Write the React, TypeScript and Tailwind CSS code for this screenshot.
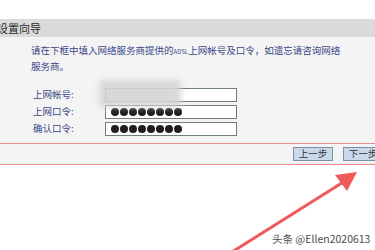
import React from "react";

const cjk = { fontFamily: '"Noto Sans CJK SC", "Noto Sans", sans-serif' };

function Dots() {
  return (
    <div className="flex items-center gap-[1px] pl-[5px]">
      {Array.from({ length: 8 }).map((_, i) => (
        <span key={i} className="block w-[8px] h-[8px] rounded-full bg-[#1e1e1e]" />
      ))}
    </div>
  );
}

function Field({ label, children }: { label: string; children?: React.ReactNode }) {
  return (
    <div className="flex items-center h-[17px]">
      <span className="w-[74px] pl-[2px] text-[9.5px] text-[#3a4888]">{label}</span>
      <div className="relative w-[132px] h-[14px] border border-[#6e7f7a] bg-white flex items-center">
        {children}
      </div>
    </div>
  );
}

export default function App() {
  return (
    <div className="relative w-[375px] h-[250px] overflow-hidden bg-white" style={cjk}>
      <div className="h-[19px]" />
      <div className="h-[18px] bg-[#dadada] flex items-center">
        <span className="ml-[-3px] text-[11px] text-[#2a2a2a]">设置向导</span>
      </div>
      <div className="bg-[#f4f4f4] h-[106px] pl-[31px] pt-[6px]">
        <p className="text-[9.5px] leading-[14px] text-[#3a4888] whitespace-nowrap">
          请在下框中填入网络服务商提供的<span className="text-[6px]">ADSL</span>上网帐号及口令，如遗忘请咨询网络
        </p>
        <p className="text-[9.5px] leading-[14px] text-[#3a4888]">服务商。</p>
        <div className="mt-[13px] flex flex-col relative">
          <Field label="上网帐号:" />
          <Field label="上网口令:">
            <Dots />
          </Field>
          <Field label="确认口令:">
            <Dots />
          </Field>
          <div className="absolute left-[68px] top-[-6px] w-[82px] h-[27px] bg-[#d4d4d4] blur-[3px] opacity-90" />
        </div>
      </div>
      <div className="h-[22px] border-y border-[#f08a8a] bg-[#f4f4f6] flex items-center justify-end gap-[10px]">
        <button className="w-[40px] h-[14px] bg-[#c9d9ea] border border-[#7d8fa3] text-[9.5px] leading-none text-[#333]">
          上一步
        </button>
        <button className="w-[40px] h-[14px] mr-[-8px] bg-[#c9d9ea] border border-[#7d8fa3] text-[9.5px] leading-none text-[#333]">
          下一步
        </button>
      </div>
      <svg className="absolute left-0 top-0" width="375" height="250" viewBox="0 0 375 250">
        <line x1="232" y1="252" x2="345" y2="181" stroke="#f05a5a" strokeWidth="3" strokeLinecap="round" />
        <polygon points="357,172 335,175 347,191" fill="#f05a5a" />
      </svg>
      <div
        className="absolute left-[272px] top-[231px] text-[10.5px] text-[#4a4a4a] whitespace-nowrap"
        style={{ ...cjk, textShadow: "0 0 2px #fff" }}
      >
        头条 @Ellen2020613
      </div>
    </div>
  );
}
